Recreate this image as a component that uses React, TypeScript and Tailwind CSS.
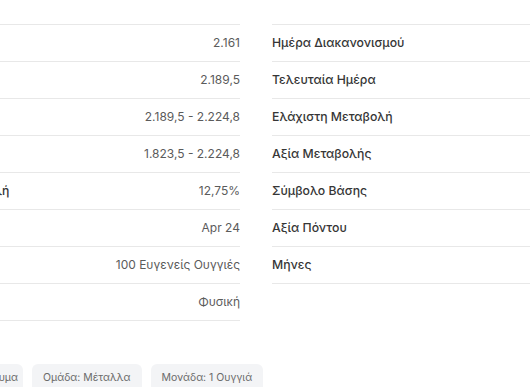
import React from "react";

const leftRows = [
    { label: "Κλείσιμο", value: "2.161" },
    { label: "Άνοιγμα", value: "2.189,5" },
    { label: "Εύρος Ημέρας", value: "2.189,5 - 2.224,8" },
    { label: "Εύρος 52 εβδ.", value: "1.823,5 - 2.224,8" },
    { label: "Ετήσια Μεταβολή", value: "12,75%" },
    { label: "Μήνας", value: "Apr 24" },
    { label: "Συμβόλαιο", value: "100 Ευγενείς Ουγγιές" },
    { label: "Διακανονισμός", value: "Φυσική" },
];

const rightRows = [
    "Ημέρα Διακανονισμού",
    "Τελευταία Ημέρα",
    "Ελάχιστη Μεταβολή",
    "Αξία Μεταβολής",
    "Σύμβολο Βάσης",
    "Αξία Πόντου",
    "Μήνες",
];

export default function App() {
    return (
        <div
            className="relative w-[530px] h-[387px] overflow-hidden bg-white"
            style={{ fontFamily: "Inter, 'Noto Sans', sans-serif" }}
        >
            <div className="-ml-[96px] pt-6">
                <div className="flex gap-8">
                    <div className="w-[336px] shrink-0 border-t border-[#e8e8e8]">
                        {leftRows.map((row) => (
                            <div
                                key={row.value}
                                className="flex h-[37px] items-center justify-between border-b border-[#e8e8e8]"
                            >
                                <span className="text-[12.25px] font-medium text-[#363636]">{row.label}</span>
                                <span className="text-[12px] text-[#5b5b5b]">{row.value}</span>
                            </div>
                        ))}
                    </div>
                    <div className="w-[336px] shrink-0 border-t border-[#e8e8e8]">
                        {rightRows.map((label) => (
                            <div
                                key={label}
                                className="flex h-[37px] items-center border-b border-[#e8e8e8]"
                            >
                                <span className="text-[12.25px] font-medium text-[#363636]">{label}</span>
                            </div>
                        ))}
                    </div>
                </div>

                <div className="mt-[43px] flex gap-[9px] text-[10.5px] leading-4 text-[#6b6b6b]">
                    <div className="flex w-[119px] shrink-0 justify-end overflow-hidden whitespace-nowrap rounded-md bg-[#f3f4f6] py-1.5 pr-[5px]">
                        Είδος: Εμπόρευμα
                    </div>
                    <div className="shrink-0 rounded-md bg-[#f3f4f6] px-[11px] py-1.5">Ομάδα: Μέταλλα</div>
                    <div className="shrink-0 rounded-md bg-[#f3f4f6] px-[11px] py-1.5">Μονάδα: 1 Ουγγιά</div>
                </div>
            </div>
        </div>
    );
}
